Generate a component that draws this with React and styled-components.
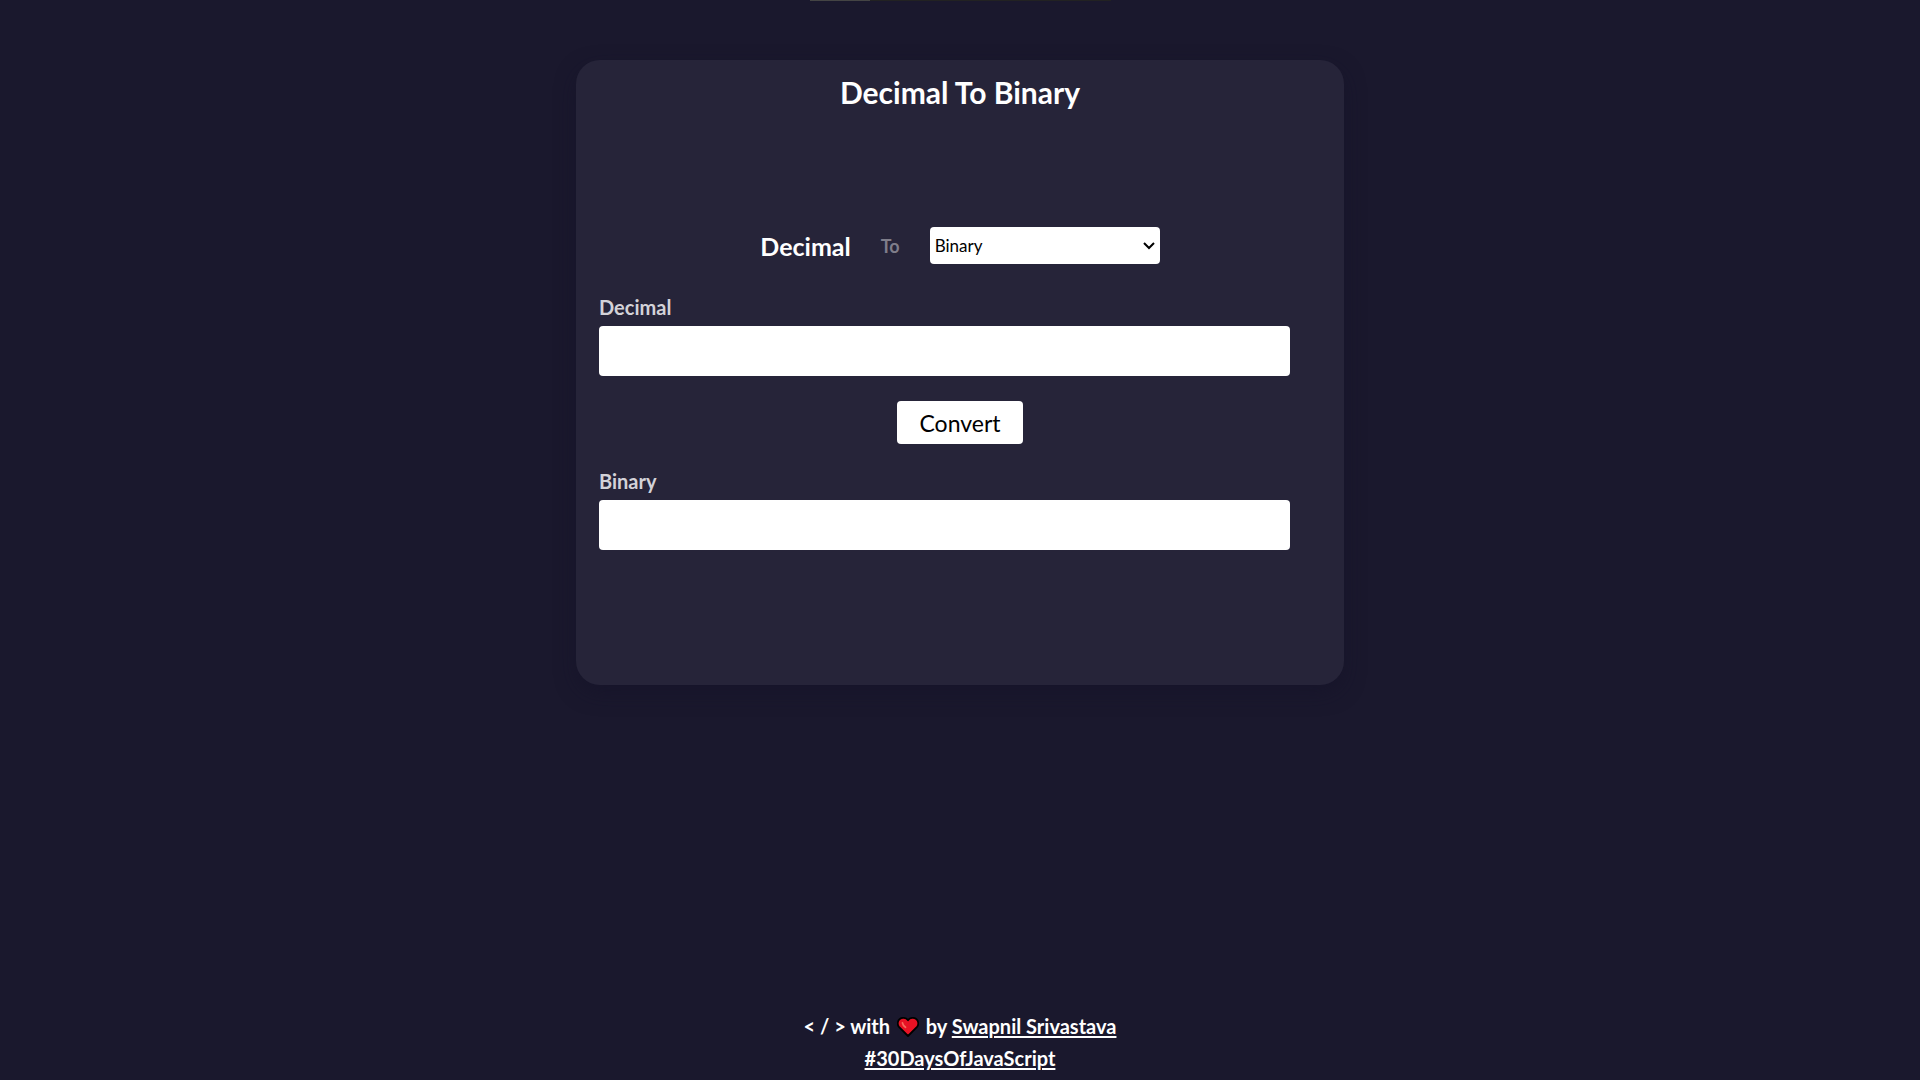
import React, { useState } from "react";
import styled, { createGlobalStyle } from "styled-components";

const GlobalStyle = createGlobalStyle`
  * { box-sizing: border-box; }
  body {
    margin: 0;
    background: #1a182d;
    color: #fff;
    font-family: Lato, "Open Sans", sans-serif;
  }
  button, input, select { font-family: inherit; }
`;

const Page = styled.div`
  min-height: 100vh;
  display: flex;
  flex-direction: column;
  align-items: center;
`;

const TopBar = styled.div`
  width: 301px;
  height: 1px;
  background: #222;
`;

const TopBarFill = styled.div`
  width: 20%;
  height: 100%;
  background: #444;
`;

const Card = styled.main`
  width: 40%;
  min-width: 480px;
  margin-top: 59px;
  padding: 12px 23px 135px;
  border-radius: 24px;
  background: #262439;
  box-shadow: 0 8px 20px rgba(20, 18, 40, 0.5);
`;

const Title = styled.h1`
  margin: 0;
  font-size: 30px;
  line-height: 40px;
  text-align: center;
`;

const Form = styled.form`
  display: flex;
  flex-direction: column;
  margin-top: 115px;
`;

const ChoiceRow = styled.div`
  display: flex;
  align-items: center;
  justify-content: center;
  gap: 30px;
`;

const SourceUnit = styled.span`
  font-size: 25px;
  font-weight: 700;
  line-height: 32px;
`;

const ToLabel = styled.label`
  color: #7f7d8a;
  font-size: 18px;
  font-weight: 700;
`;

const SelectBox = styled.div`
  position: relative;
  width: 230px;
`;

const Select = styled.select`
  display: block;
  width: 100%;
  height: 37px;
  padding: 0 5px;
  border: 0;
  border-radius: 4px;
  appearance: none;
  background: #fff;
  color: #000;
  font-size: 17px;
`;

const Chevron = styled.svg`
  position: absolute;
  top: 15px;
  right: 5px;
  pointer-events: none;
`;

const Field = styled.div`
  display: flex;
  flex-direction: column;
  gap: 6px;
  margin-top: ${(p) => p.$space}px;
`;

const FieldLabel = styled.label`
  color: #d3d2d8;
  font-size: 20px;
  font-weight: 700;
  line-height: 26px;
`;

const Input = styled.input`
  width: 691px;
  max-width: 100%;
  height: 50px;
  padding: 0 12px;
  border: 0;
  border-radius: 4px;
  background: #fff;
  font-size: 20px;
`;

const ConvertButton = styled.button`
  align-self: center;
  height: 43px;
  margin-top: 25px;
  padding: 0 22px;
  border: 0;
  border-radius: 4px;
  background: #fff;
  color: #000;
  font-size: 23px;
`;

const Footer = styled.footer`
  margin-top: auto;
  padding-bottom: 6px;
  font-size: 20px;
  font-weight: 700;
  line-height: 32px;
  text-align: center;
`;

const Link = styled.a`
  color: inherit;
  text-underline-offset: 2px;
`;

const Heart = styled.svg`
  margin: 0 2px;
  vertical-align: -3px;
`;

export default function App() {
  const [target, setTarget] = useState("Binary");
  const [value, setValue] = useState("");
  const [result, setResult] = useState("");

  const convert = (event) => {
    event.preventDefault();
    const bases = { Binary: 2, Octal: 8, Hexadecimal: 16 };
    const number = parseInt(value, 10);
    setResult(Number.isNaN(number) ? "" : number.toString(bases[target]));
  };

  return (
    <>
      <GlobalStyle />
      <Page>
        <TopBar>
          <TopBarFill />
        </TopBar>
        <Card>
          <Title>Decimal To {target}</Title>
          <Form onSubmit={convert}>
            <ChoiceRow>
              <SourceUnit>Decimal</SourceUnit>
              <ToLabel htmlFor="target">To</ToLabel>
              <SelectBox>
                <Select id="target" value={target} onChange={(e) => setTarget(e.target.value)}>
                  <option>Binary</option>
                  <option>Octal</option>
                  <option>Hexadecimal</option>
                </Select>
                <Chevron width="12" height="8" viewBox="0 0 12 8" aria-hidden="true">
                  <path d="M1 1l5 5 5-5" fill="none" stroke="#000" strokeWidth="2" />
                </Chevron>
              </SelectBox>
            </ChoiceRow>
            <Field $space={30}>
              <FieldLabel htmlFor="decimal">Decimal</FieldLabel>
              <Input id="decimal" value={value} onChange={(e) => setValue(e.target.value)} />
            </Field>
            <ConvertButton type="submit">Convert</ConvertButton>
            <Field $space={24}>
              <FieldLabel htmlFor="result">{target}</FieldLabel>
              <Input id="result" value={result} readOnly />
            </Field>
          </Form>
        </Card>
        <Footer>
          <div>
            {"< / > with "}
            <Heart width="22" height="20" viewBox="0 0 22 20" role="img" aria-label="love">
              <path
                d="M11 19L2.200 10.200C-.2 7.600.6 3.600 2.800 2C5.200.2 8.800.6 11 3.200C13.200.6 16.800.2 19.200 2C21.400 3.600 22.200 7.600 19.800 10.200Z"
                fill="#e81224"
                stroke="#000"
                strokeWidth="1.8"
                strokeLinejoin="round"
              />
              <path d="M5.500 6c.2 1.800 1.200 3 3 4.200" fill="none" stroke="#f9695c" strokeWidth="1.800" strokeLinecap="round" />
            </Heart>
            {" by "}
            <Link href="#author">Swapnil Srivastava</Link>
          </div>
          <div>
            <Link href="#challenge">#30DaysOfJavaScript</Link>
          </div>
        </Footer>
      </Page>
    </>
  );
}
